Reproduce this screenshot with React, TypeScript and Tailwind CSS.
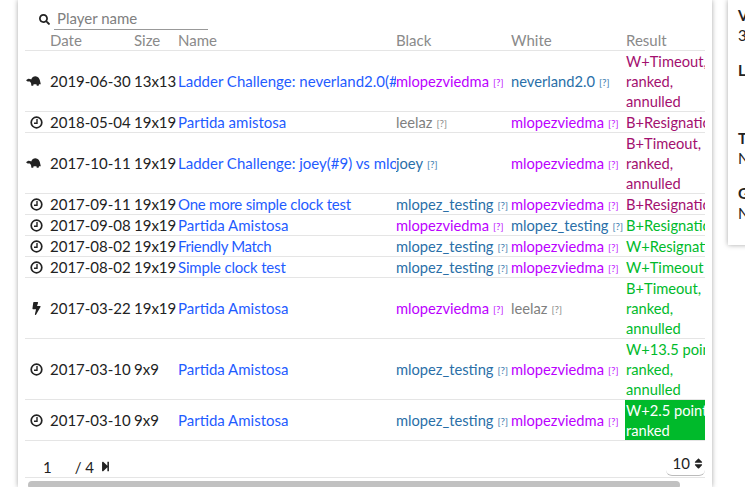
import { FaBolt, FaSearch, FaSort, FaStepForward } from 'react-icons/fa'

const PURPLE = 'text-[#bb00ff]'
const BLUE = 'text-[#2a6fa8]'
const GRAY = 'text-[#808080]'

type Player = { name: string; color: string }
type Game = {
  icon: 'turtle' | 'clock' | 'bolt'
  date: string
  size: string
  name: string
  nameClass?: string
  black: Player
  white: Player
  result: string[]
  resultClass: string
  h: string
}

const me = { name: 'mlopezviedma', color: PURPLE }
const testing = { name: 'mlopez_testing', color: BLUE }
const leelaz = { name: 'leelaz', color: GRAY }
const neverland = { name: 'neverland2.0', color: BLUE }
const joey = { name: 'joey', color: BLUE }

const LOSS = 'text-[#a3106f]'
const WIN = 'text-[#00ba2b]'

const games: Game[] = [
  { icon: 'turtle', date: '2019-06-30', size: '13x13', name: 'Ladder Challenge: neverland2.0(#9) vs mlojoey', black: me, white: neverland, result: ['W+Timeout,', 'ranked,', 'annulled'], resultClass: LOSS, h: 'h-[61px]' },
  { icon: 'clock', date: '2018-05-04', size: '19x19', name: 'Partida amistosa', black: leelaz, white: me, result: ['B+Resignation'], resultClass: LOSS, h: 'h-[21px]' },
  { icon: 'turtle', date: '2017-10-11', size: '19x19', name: 'Ladder Challenge: joey(#9) vs mlojoey', black: joey, white: me, result: ['B+Timeout,', 'ranked,', 'annulled'], resultClass: LOSS, h: 'h-[61px]' },
  { icon: 'clock', date: '2017-09-11', size: '19x19', name: 'One more simple clock test', nameClass: 'tracking-[-0.23px]', black: testing, white: me, result: ['B+Resignation'], resultClass: LOSS, h: 'h-[21px]' },
  { icon: 'clock', date: '2017-09-08', size: '19x19', name: 'Partida Amistosa', black: me, white: testing, result: ['B+Resignation'], resultClass: WIN, h: 'h-[21px]' },
  { icon: 'clock', date: '2017-08-02', size: '19x19', name: 'Friendly Match', nameClass: 'tracking-[-0.35px]', black: testing, white: me, result: ['W+Resignation'], resultClass: WIN, h: 'h-[21px]' },
  { icon: 'clock', date: '2017-08-02', size: '19x19', name: 'Simple clock test', nameClass: 'tracking-[-0.18px]', black: testing, white: me, result: ['W+Timeout'], resultClass: WIN, h: 'h-[21px]' },
  { icon: 'bolt', date: '2017-03-22', size: '19x19', name: 'Partida Amistosa', black: me, white: leelaz, result: ['B+Timeout,', 'ranked,', 'annulled'], resultClass: WIN, h: 'h-[61px]' },
  { icon: 'clock', date: '2017-03-10', size: '9x9', name: 'Partida Amistosa', black: testing, white: me, result: ['W+13.5 points,', 'ranked,', 'annulled'], resultClass: WIN, h: 'h-[61px]' },
  { icon: 'clock', date: '2017-03-10', size: '9x9', name: 'Partida Amistosa', black: testing, white: me, result: ['W+2.5 points,', 'ranked'], resultClass: 'bg-[#00ba2b] text-white', h: 'h-[41px]' },
]

function Turtle() {
  return (
    <svg width="15" height="10" viewBox="0 0 15 10" className="fill-[#222] -ml-[7px]">
      <path d="M0 4.2 L2.2 2.8 L4.2 2.9 L5.2 3.4 C6 1.2 7.6 0.2 9.4 0.2 C12 0.2 13.8 2.4 14.4 6.4 L14.8 8.2 L13 8.2 L12.6 9.8 L10.8 9.8 L10.4 8.2 L7.6 8.2 L7.2 9.8 L5.4 9.8 L5 7 L3.8 5.4 L1.6 5.6 Z" />
    </svg>
  )
}

function Clock() {
  return (
    <svg width="13" height="13" viewBox="0 0 13 13" fill="none" stroke="#222">
      <circle cx="6.5" cy="6.5" r="5.3" strokeWidth="1.7" />
      <path d="M7 3 V7.2 H4" strokeWidth="1.4" />
    </svg>
  )
}

function RowIcon({ icon }: { icon: Game['icon'] }) {
  if (icon === 'turtle') return <Turtle />
  if (icon === 'bolt') return <FaBolt size={13} className="text-[#222]" />
  return <Clock />
}

function PlayerCell({ player }: { player: Player }) {
  return (
    <div className={`flex items-center whitespace-nowrap text-[14.7px] ${player.color}`}>
      <span>{player.name}</span>
      <span className="ml-[4px] text-[10px] opacity-90 pt-[2px]">[?]</span>
    </div>
  )
}

export default function App() {
  return (
    <div className="w-[745px] h-[487px] overflow-hidden bg-white flex items-start text-[15px] leading-[20px] text-[#222]" style={{ fontFamily: 'Lato, "Noto Sans", sans-serif' }}>
      {/* CARD PRINCIPAL */}
      <div className="ml-[18px] w-[694px] h-[487px] flex-none bg-white px-[7px] shadow-[0_0_5px_rgba(0,0,0,0.35)] overflow-hidden">
        <div className="h-[30px] flex items-end pl-[14px]">
          <FaSearch size={11} className="mb-[5px] text-[#222]" />
          <div className="ml-[4px] w-[154px] h-[21px] border-b border-[#999] pl-[3px] text-[#808080] leading-[19px]">Player name</div>
        </div>

        <div className="flex h-[21px] items-center border-b border-[#e5e5e5] text-[#8a8a8a]">
          <div className="w-[25px] flex-none" />
          <div className="w-[84px] flex-none">Date</div>
          <div className="w-[44px] flex-none">Size</div>
          <div className="w-[218px] flex-none">Name</div>
          <div className="w-[115px] flex-none">Black</div>
          <div className="w-[115px] flex-none">White</div>
          <div className="flex-1">Result</div>
        </div>

        {games.map((g, i) => (
          <div key={i} className={`flex items-center border-b border-[#e5e5e5] ${g.h} whitespace-nowrap`}>
            <div className="w-[23px] mr-[2px] flex-none flex justify-center">
              <RowIcon icon={g.icon} />
            </div>
            <div className="w-[84px] flex-none">{g.date}</div>
            <div className="w-[44px] flex-none">{g.size}</div>
            <div className={`w-[218px] flex-none overflow-hidden text-[#1f5cff] ${g.nameClass ?? ''}`}>{g.name}</div>
            <div className="w-[115px] flex-none overflow-hidden"><PlayerCell player={g.black} /></div>
            <div className="w-[114px] flex-none overflow-hidden"><PlayerCell player={g.white} /></div>
            <div className={`flex-1 h-full flex flex-col justify-center overflow-hidden pl-[1px] text-[14.7px] ${g.resultClass}`}>
              {g.result.map((line) => <div key={line}>{line}</div>)}
            </div>
          </div>
        ))}

        {/* PAGINACION */}
        <div className="flex h-[37px] items-center pt-[15px] border-b border-[#e5e5e5]">
          <span className="ml-[18px]">1</span>
          <span className="ml-[23px]">/ 4</span>
          <FaStepForward size={11} className="ml-[6px] text-[#222]" />
          <div className="ml-auto w-[39px] h-[24px] -mt-[6px] flex items-center justify-end gap-[2px] rounded-b-[6px] border-b border-[#bbb]">
            <span>10</span>
            <FaSort size={13} className="text-[#222]" />
          </div>
        </div>
        <div className="mt-[3px] ml-[3px] w-[652px] h-[8px] rounded-[4px] bg-[#c1c1c1]" />
      </div>

      {/* CARD LATERAL */}
      <div className="ml-[16px] w-[200px] h-[245px] flex-none bg-white pl-[10px] pt-[5px] shadow-[0_0_5px_rgba(0,0,0,0.35)] whitespace-nowrap">
        <div className="font-bold">Vacation</div>
        <div>30</div>
        <div className="font-bold mt-[15px]">Language</div>
        <div className="font-bold mt-[48px]">Tournaments</div>
        <div>None</div>
        <div className="font-bold mt-[15px]">Groups</div>
        <div>None</div>
      </div>
    </div>
  )
}
